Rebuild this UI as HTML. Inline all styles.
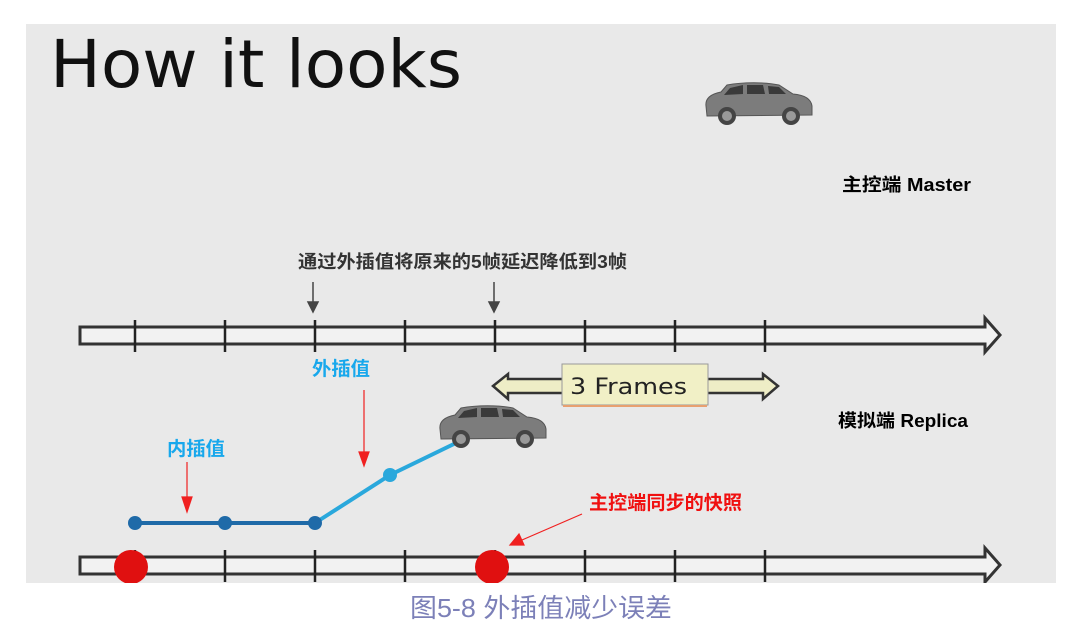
<!DOCTYPE html>
<html><head><meta charset="utf-8"><style>
html,body{margin:0;padding:0;background:#fff;width:1068px;height:627px;overflow:hidden}
</style></head><body>
<svg width="1068" height="627" viewBox="0 0 1068 627" xmlns="http://www.w3.org/2000/svg" style="position:absolute;left:0;top:0">
<defs>
<g id="car">
<path d="M3,24 C2,16 8,12 18,10 L24,3 C40,0 62,0 76,3 L90,12 C102,13 108,17 109,24 L109,33 L4,34 Z" fill="#7c7c7c" stroke="#555" stroke-width="1"/>
<path d="M27,6 L40,3 L40,12 L21,13 Z M44,3 L60,3 L62,12 L44,12 Z M65,4 L76,5 L83,12 L66,12 Z" fill="#3a3a3a"/>
<circle cx="24" cy="34" r="9" fill="#444"/><circle cx="24" cy="34" r="5" fill="#999"/>
<circle cx="88" cy="34" r="9" fill="#444"/><circle cx="88" cy="34" r="5" fill="#999"/>
</g>
</defs>
<rect x="26" y="24" width="1030" height="559" fill="#e9e9e9"/>
<text x="50" y="87" font-family="DejaVu Sans, Liberation Sans, sans-serif" font-size="66" textLength="412" lengthAdjust="spacingAndGlyphs" fill="#111">How it looks</text>
<use href="#car" x="703" y="82"/>
<text x="842" y="191" font-family="Liberation Sans, Noto Sans CJK SC, sans-serif" font-size="18" font-weight="bold" textLength="129" lengthAdjust="spacingAndGlyphs" fill="#000">主控端 Master</text>
<text x="298" y="268" font-family="Liberation Sans, Noto Sans CJK SC, sans-serif" font-size="18" font-weight="bold" textLength="329" lengthAdjust="spacingAndGlyphs" fill="#333">通过外插值将原来的5帧延迟降低到3帧</text>
<g stroke="#444" stroke-width="1.5" fill="#444">
<line x1="313" y1="282" x2="313" y2="304"/><path d="M308,302 L318,302 L313,312 Z"/>
<line x1="494" y1="282" x2="494" y2="304"/><path d="M489,302 L499,302 L494,312 Z"/>
</g>
<g fill="#f2f2f2" stroke="#333" stroke-width="3">
<path d="M80,327 L985,327 L985,318 L1000,335 L985,352 L985,344 L80,344 Z"/>
<path d="M80,557 L985,557 L985,548 L1000,565 L985,582 L985,574 L80,574 Z"/>
</g>
<g stroke="#222" stroke-width="2.5">
<path d="M135,320V352M225,320V352M315,320V352M405,320V352M495,320V352M585,320V352M675,320V352M765,320V352"/>
<path d="M135,550V582M225,550V582M315,550V582M405,550V582M495,550V582M585,550V582M675,550V582M765,550V582"/>
</g>
<path d="M493,386 L508,374 L508,379 L565,379 L565,393 L508,393 L508,399 Z M778,386 L763,374 L763,379 L705,379 L705,393 L763,393 L763,399 Z" fill="#eeedc6" stroke="#333" stroke-width="2.5"/>
<rect x="562" y="364" width="146" height="41" fill="#f1f0c6" stroke="#999" stroke-width="1"/>
<line x1="563" y1="406" x2="707" y2="406" stroke="#e8a070" stroke-width="2"/>
<text x="570" y="394" font-family="DejaVu Sans, Liberation Sans, sans-serif" font-size="22" textLength="117" lengthAdjust="spacingAndGlyphs" fill="#222">3 Frames</text>
<text x="838" y="427" font-family="Liberation Sans, Noto Sans CJK SC, sans-serif" font-size="18" font-weight="bold" textLength="130" lengthAdjust="spacingAndGlyphs" fill="#000">模拟端 Replica</text>
<text x="312" y="375" font-family="Liberation Sans, Noto Sans CJK SC, sans-serif" font-size="19" font-weight="bold" textLength="58" lengthAdjust="spacingAndGlyphs" fill="#18a8ec">外插值</text>
<text x="167" y="455" font-family="Liberation Sans, Noto Sans CJK SC, sans-serif" font-size="19" font-weight="bold" textLength="58" lengthAdjust="spacingAndGlyphs" fill="#18a8ec">内插值</text>
<text x="589" y="509" font-family="Liberation Sans, Noto Sans CJK SC, sans-serif" font-size="19" font-weight="bold" textLength="153" lengthAdjust="spacingAndGlyphs" fill="#f01010">主控端同步的快照</text>
<g stroke="#f02020" stroke-width="1.2" fill="#f02020">
<line x1="187" y1="462" x2="187" y2="500"/><path d="M182,497 L192,497 L187,512 Z"/>
<line x1="364" y1="390" x2="364" y2="455"/><path d="M359,452 L369,452 L364,466 Z"/>
<line x1="582" y1="514" x2="522" y2="540"/><path d="M510,545 L519,534 L524,545 Z"/>
</g>
<polyline points="135,523 225,523 315,523" fill="none" stroke="#1f6aa8" stroke-width="4"/>
<polyline points="315,523 390,475 458,442" fill="none" stroke="#2aa8dc" stroke-width="4"/>
<g fill="#1f6aa8"><circle cx="135" cy="523" r="7"/><circle cx="225" cy="523" r="7"/><circle cx="315" cy="523" r="7"/></g>
<circle cx="390" cy="475" r="7" fill="#2aa8dc"/>
<use href="#car" x="437" y="405"/>
<circle cx="131" cy="567" r="17" fill="#e01010"/>
<circle cx="492" cy="567" r="17" fill="#e01010"/>
<rect x="0" y="583" width="1068" height="44" fill="#fff"/>
<text x="410" y="617" font-family="Liberation Sans, Noto Sans CJK SC, sans-serif" font-size="26" textLength="262" lengthAdjust="spacingAndGlyphs" fill="#7c80b8">图5-8 外插值减少误差</text>
</svg>
</body></html>
